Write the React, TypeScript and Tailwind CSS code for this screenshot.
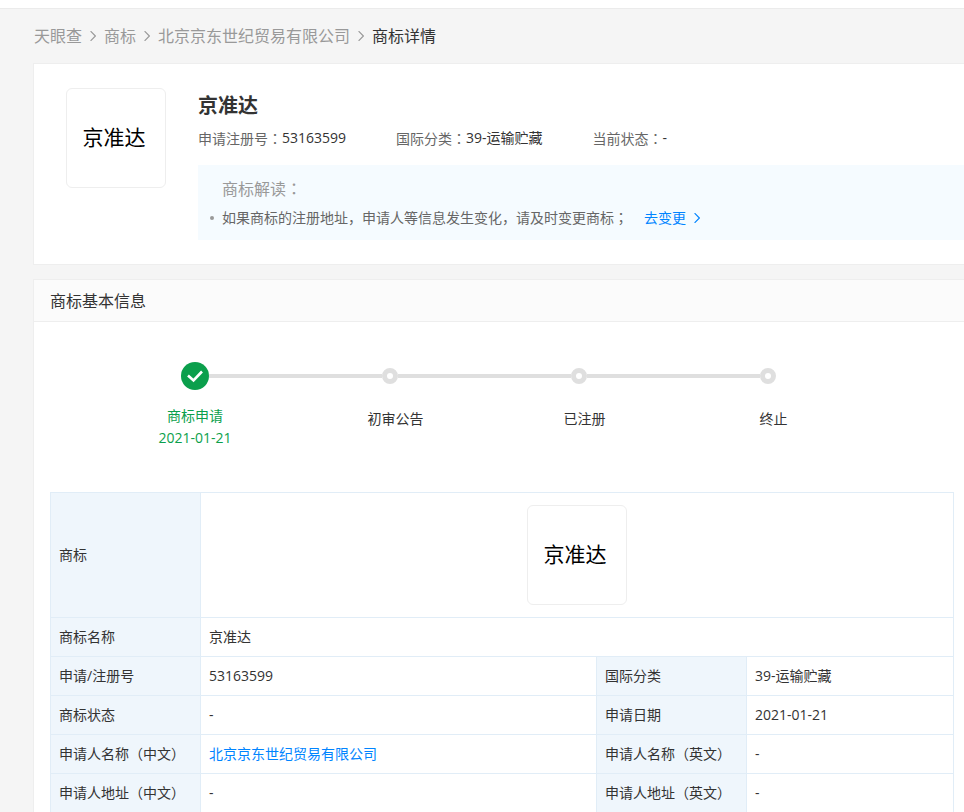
import type { ReactNode } from "react";
import clsx from "clsx";

type Cell = {
  label: string;
  value: ReactNode;
};

const breadcrumbs = ["天眼查", "商标", "北京京东世纪贸易有限公司"];

const summary = [
  { label: "申请注册号", value: "53163599" },
  { label: "国际分类", value: "39-运输贮藏" },
  { label: "当前状态", value: "-" },
];

const steps = [
  { label: "商标申请", date: "2021-01-21" },
  { label: "初审公告" },
  { label: "已注册" },
  { label: "终止" },
];

const rows: [Cell, Cell][] = [
  [
    { label: "申请/注册号", value: "53163599" },
    { label: "国际分类", value: "39-运输贮藏" },
  ],
  [
    { label: "商标状态", value: "-" },
    { label: "申请日期", value: "2021-01-21" },
  ],
  [
    {
      label: "申请人名称（中文）",
      value: (
        <a href="#company" className="text-[#0084ff]">
          北京京东世纪贸易有限公司
        </a>
      ),
    },
    { label: "申请人名称（英文）", value: "-" },
  ],
  [
    { label: "申请人地址（中文）", value: "-" },
    { label: "申请人地址（英文）", value: "-" },
  ],
];

function Chevron({ className }: { className?: string }) {
  return (
    <svg
      viewBox="0 0 6 10"
      className={clsx("h-[10px] w-[6px] shrink-0", className)}
      fill="none"
      stroke="currentColor"
      strokeWidth="1.2"
      aria-hidden="true"
    >
      <path d="M0.6 0.2 L5.4 5 L0.6 9.8" />
    </svg>
  );
}

// The TC face centres full-width punctuation in its box
function Punct({ children }: { children: string }) {
  return <span className="font-['Noto_Sans_CJK_TC',sans-serif]">{children}</span>;
}

function TrademarkImage() {
  return (
    <div className="flex h-[100px] w-[100px] shrink-0 items-center justify-center rounded-md border border-[#eeeeee] bg-white pr-1 pb-[2px] text-[21px] leading-6 text-black">
      京准达
    </div>
  );
}

function Breadcrumb() {
  return (
    <nav className="flex h-[54px] items-center pl-px text-base text-[#999999]">
      {breadcrumbs.map((item) => (
        <span key={item} className="flex items-center">
          <a href="#crumb">{item}</a>
          <Chevron className="mx-2" />
        </span>
      ))}
      <span className="text-[#333333]">商标详情</span>
    </nav>
  );
}

function SummaryCard() {
  return (
    <section className="flex border border-r-0 border-[#eeeeee] bg-white pb-6 pl-8 pt-6">
      <TrademarkImage />
      <div className="ml-8 min-w-0 flex-1">
        <h1 className="pt-[2px] text-xl leading-8 font-bold text-[#333333]">京准达</h1>
        <dl className="mt-[6px] flex gap-[50px] text-sm leading-5">
          {summary.map((item) => (
            <div key={item.label} className="flex">
              <dt className="text-[#666666]">
                {item.label}
                <Punct>：</Punct>
              </dt>
              <dd className="text-[#333333]">{item.value}</dd>
            </div>
          ))}
        </dl>
        <div className="mt-4 bg-[#f5fbff] pb-3 pl-6 pt-[11px]">
          <p className="text-base leading-6 text-[#999999]">
            商标解读
            <Punct>：</Punct>
          </p>
          <div className="-ml-3 mt-[6px] flex items-center text-sm leading-5 text-[#666666]">
            <span className="mr-2 h-1 w-1 rounded-full bg-[#999999]" />
            <p>
              如果商标的注册地址，申请人等信息发生变化，请及时变更商标
              <Punct>；</Punct>
            </p>
            <a href="#change" className="ml-4 flex items-center text-[#0084ff]">
              去变更
              <Chevron className="ml-2" />
            </a>
          </div>
        </div>
      </div>
    </section>
  );
}

function Progress() {
  return (
    <div className="h-[170px] pt-10">
      <div className="flex items-center pl-[147px]" aria-hidden="true">
        <svg viewBox="0 0 28 28" className="h-7 w-7">
          <circle cx="14" cy="14" r="14" fill="#0b9f4c" />
          <path d="M7 13.5 L12.5 18.5 L21 9.5" fill="none" stroke="#ffffff" strokeWidth="2.6" />
        </svg>
        {steps.slice(1).map((step) => (
          <div key={step.label} className="flex items-center">
            <span className="h-1 w-[173px] bg-[#dfdfdf]" />
            <span className="h-4 w-4 rounded-full border-[5px] border-[#dfdfdf] bg-white" />
          </div>
        ))}
      </div>
      <ol className="flex pl-[55px] pt-[15px] text-center text-sm leading-[22px] text-[#333333]">
        {steps.map((step) =>
          step.date ? (
            <li key={step.label} className="w-[212px] text-[#0b9f4c]">
              <p>{step.label}</p>
              <p>{step.date}</p>
            </li>
          ) : (
            <li key={step.label} className="w-[189px] pt-[3px]">
              {step.label}
            </li>
          )
        )}
      </ol>
    </div>
  );
}

function InfoTable() {
  const th = "border border-[#e1edf7] bg-[#eff6fc] px-2 text-left font-normal whitespace-nowrap";
  const td = "border border-[#e1edf7] px-2";

  return (
    <table className="w-full table-fixed border-collapse text-sm leading-[22px] text-[#333333]">
      <colgroup>
        <col className="w-[150px]" />
        <col />
        <col className="w-[150px]" />
        <col className="w-[207px]" />
      </colgroup>
      <tbody>
        <tr>
          <th scope="row" className={th}>
            商标
          </th>
          <td colSpan={3} className={clsx(td, "py-3")}>
            <div className="flex justify-center">
              <TrademarkImage />
            </div>
          </td>
        </tr>
        <tr className="h-[39px]">
          <th scope="row" className={th}>
            商标名称
          </th>
          <td colSpan={3} className={td}>
            京准达
          </td>
        </tr>
        {rows.map(([left, right]) => (
          <tr key={left.label} className="h-[39px]">
            <th scope="row" className={th}>
              {left.label}
            </th>
            <td className={td}>{left.value}</td>
            <th scope="row" className={th}>
              {right.label}
            </th>
            <td className={td}>{right.value}</td>
          </tr>
        ))}
      </tbody>
    </table>
  );
}

export default function App() {
  return (
    <div className="min-h-screen bg-[#f5f5f5] font-['Open_Sans','Noto_Sans_CJK_SC',sans-serif]">
      <header className="h-[9px] border-b border-[#ebebeb] bg-white" />
      <main className="pl-[33px]">
        <Breadcrumb />
        <SummaryCard />
        <section className="mt-[14px] border border-r-0 border-b-0 border-[#eeeeee] bg-white">
          <h2 className="border-b border-[#eeeeee] bg-[#fbfbfb] px-4 pt-[9px] pb-[7px] text-base leading-[25px] text-[#333333]">
            商标基本信息
          </h2>
          <Progress />
          <div className="pl-4 pr-[10px]">
            <InfoTable />
          </div>
        </section>
      </main>
    </div>
  );
}
